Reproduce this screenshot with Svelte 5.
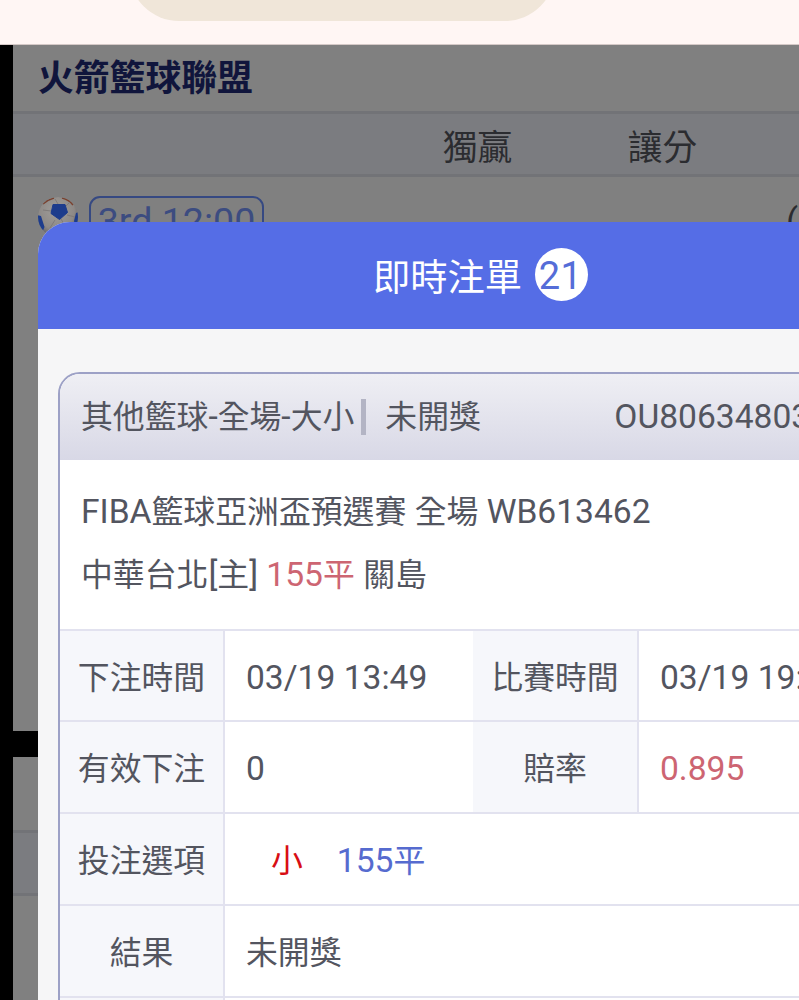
<script>
  const columns = ['獨贏', '讓分'];

  const bet = {
    category: '其他籃球-全場-大小',
    status: '未開獎',
    number: 'OU8063480372',
    event: 'FIBA籃球亞洲盃預選賽 全場 WB613462',
    home: '中華台北[主]',
    line: '155平',
    away: '關島',
  };

  // Latin runs are set slightly larger than the Chinese text around them.
  const runs = (text) =>
    text
      .split(/([\x20-\x7e]+)/)
      .filter(Boolean)
      .map((part) => ({ part, latin: /^[\x20-\x7e]/.test(part) }));
</script>

{#snippet mixed(text)}{#each runs(text) as run}<span class:latin={run.latin}>{run.part}</span>{/each}{/snippet}

<div class="screen">
  <header class="browser"><div class="address"></div></header>

  <main class="page">
    <section class="league">
      <h2>火箭籃球聯盟</h2>
      <div class="columns">
        {#each columns as column}<span>{column}</span>{/each}
      </div>
      <div class="match">
        <svg class="ball" viewBox="0 0 42 42">
          <defs>
            <radialGradient id="shade" cx="45%" cy="35%" r="65%">
              <stop offset="0" stop-color="#a09d9a" />
              <stop offset=".7" stop-color="#8d8986" />
              <stop offset="1" stop-color="#5d5c62" />
            </radialGradient>
            <clipPath id="edge"><circle cx="21" cy="21" r="20" /></clipPath>
          </defs>
          <g clip-path="url(#edge)">
            <circle cx="21" cy="21" r="20" fill="url(#shade)" />
            <path d="M6 8 Q11 3.5 17 2M25 2 Q32 3.5 36 9" stroke="#79412f" stroke-width="1.6" fill="none" />
            <path d="M21 8 L18 3M28 11 L33 6M14 15 L6 14M18 24 L13 32M30 19 L38 21M24 23 L30 33" stroke="#7a7573" stroke-width=".8" fill="none" />
            <path d="M16 8.5 L28 8.5 L30.5 16.5 L22.5 23.5 L14 17.5Z" fill="#1d3c8c" stroke="#1d3c8c" stroke-linejoin="round" />
            <path d="M0 19 L4 20 L7.5 31 L5 37 L0 31ZM42 16 L39 17 L37 25 L38 29 L42 31ZM13 35 L26 34 L30 42 L12 42Z" fill="#1d3c8c" />
          </g>
        </svg>
        <span class="period">3rd 12:00</span>
        <span class="note">(</span>
      </div>
    </section>
    <section class="league second">
      <div class="blank"></div>
      <div class="columns"></div>
    </section>
  </main>

  <div class="dialog">
    <div class="title"><span class="heading">即時注單</span><span class="count">21</span></div>
    <div class="content">
      <article class="card">
        <div class="card-head">
          <span class="category">{@render mixed(bet.category)}</span>
          <i class="bar"></i>
          <span>{bet.status}</span>
          <span class="number latin">{bet.number}</span>
        </div>
        <div class="summary">
          <p>{@render mixed(bet.event)}</p>
          <p>{@render mixed(bet.home + ' ')}<span class="red">{@render mixed(bet.line)}</span>{@render mixed(' ' + bet.away)}</p>
        </div>
        <div class="details">
          <div class="label">下注時間</div>
          <div class="value">{@render mixed('03/19 13:49')}</div>
          <div class="label">比賽時間</div>
          <div class="value">{@render mixed('03/19 19:00')}</div>
          <div class="label">有效下注</div>
          <div class="value">{@render mixed('0')}</div>
          <div class="label">賠率</div>
          <div class="value red">{@render mixed('0.895')}</div>
          <div class="label">投注選項</div>
          <div class="value wide pick"><span class="under">小</span><span class="blue">{@render mixed('155平')}</span></div>
          <div class="label">結果</div>
          <div class="value wide">未開獎</div>
          <div class="label"></div>
          <div class="value wide"></div>
        </div>
      </article>
    </div>
  </div>
</div>

<style>
  :global(body) { margin: 0; overflow: hidden; }
  .screen {
    position: relative;
    width: 799px;
    height: 1000px;
    overflow: hidden;
    display: flex;
    flex-direction: column;
    background: #000;
    font-family: Roboto, 'Noto Sans CJK TC', sans-serif;
    font-size: 31.85px;
    color: #53555f;
    white-space: nowrap;
  }
  .browser {
    flex: none;
    box-sizing: border-box;
    height: 45px;
    padding-left: 129px;
    background: #fff6f4;
    border-bottom: 1px solid #d5c9c7;
    overflow: hidden;
  }
  .address {
    width: 426px;
    height: 100px;
    margin-top: -79px;
    border-radius: 50px;
    background: #f0e6d9;
  }
  .page {
    flex: 1;
    display: flex;
    flex-direction: column;
    gap: 26px;
    padding-left: 13px;
  }
  .league { height: 686px; background: #808080; overflow: hidden; }
  .second { height: 243px; }
  .blank { height: 73px; }
  h2 {
    box-sizing: border-box;
    height: 66px;
    margin: 0;
    padding-left: 25px;
    font-size: 35.8px;
    line-height: 68px;
    font-weight: 700;
    color: #10153c;
  }
  .columns {
    box-sizing: border-box;
    height: 66px;
    padding-left: 372px;
    display: flex;
    background: #7b7c80;
    border: solid #727377;
    border-width: 3px 0;
    font-size: 34.7px;
    line-height: 69px;
    color: #2b2c30;
  }
  .columns span { width: 185px; text-align: center; }
  .match {
    display: flex;
    align-items: flex-start;
    padding: 19px 0 0 24px;
  }
  .ball { width: 42px; height: 42px; }
  .period {
    box-sizing: border-box;
    width: 175px;
    height: 54px;
    margin-left: 10px;
    border: 2px solid #364982;
    border-radius: 11px;
    font-size: 37.6px;
    line-height: 47px;
    text-align: center;
    color: #3c4c80;
  }
  .note { margin: 5px 0 0 522px; font-size: 35px; color: #2b2c30; }
  .dialog {
    position: absolute;
    left: 38px;
    top: 222px;
    width: 885px;
    height: 800px;
    border-radius: 32px 32px 0 0;
    overflow: hidden;
    background: #f6f6f7;
  }
  .title {
    height: 107px;
    display: flex;
    align-items: center;
    justify-content: center;
    gap: 13px;
    background: #556de6;
    color: #fff;
    font-size: 37.3px;
  }
  .heading { padding-bottom: 2px; }
  .count {
    width: 53px;
    height: 53px;
    margin-bottom: 2px;
    border-radius: 50%;
    background: #fff;
    color: #556dd8;
    font-size: 38px;
    letter-spacing: 0.6px;
    line-height: 57px;
    text-align: center;
    text-indent: -2px;
  }
  .content { padding: 43px 20px 0; }
  .card {
    border: 2px solid #9da1c6;
    border-radius: 22px;
    overflow: hidden;
    background: #fff;
  }
  .card-head {
    height: 86px;
    padding-left: 21px;
    display: flex;
    align-items: center;
    line-height: 48px;
    background: linear-gradient(#efeff4, #d8d8e6);
  }
  .bar {
    width: 5px;
    height: 36px;
    margin: 0 19px 0 7px;
    background: #b3b4c4;
  }
  .number { margin-left: 133.5px; }
  .latin { font-size: 33.6px; }
  .summary {
    box-sizing: border-box;
    height: 168.6px;
    padding: 20px 0 0 21px;
  }
  p { height: 63px; margin: 0; line-height: 64px; }
  .details {
    display: grid;
    grid-template-columns: 163px 250px 164px 1fr;
    grid-auto-rows: 91.9px;
    line-height: 94px;
  }
  .label {
    border-top: 2px solid #e2e2ef;
    background: #f6f7fb;
    text-align: center;
  }
  .value {
    padding-left: 21px;
    border: solid #e2e2ef;
    border-width: 2px 0 0 2px;
  }
  .wide { grid-column: span 3; }
  .pick { padding-left: 46px; display: flex; gap: 34px; }
  .red { color: #cd6572; }
  .under { color: #d80e13; }
  .blue { color: #566bcf; }
</style>
